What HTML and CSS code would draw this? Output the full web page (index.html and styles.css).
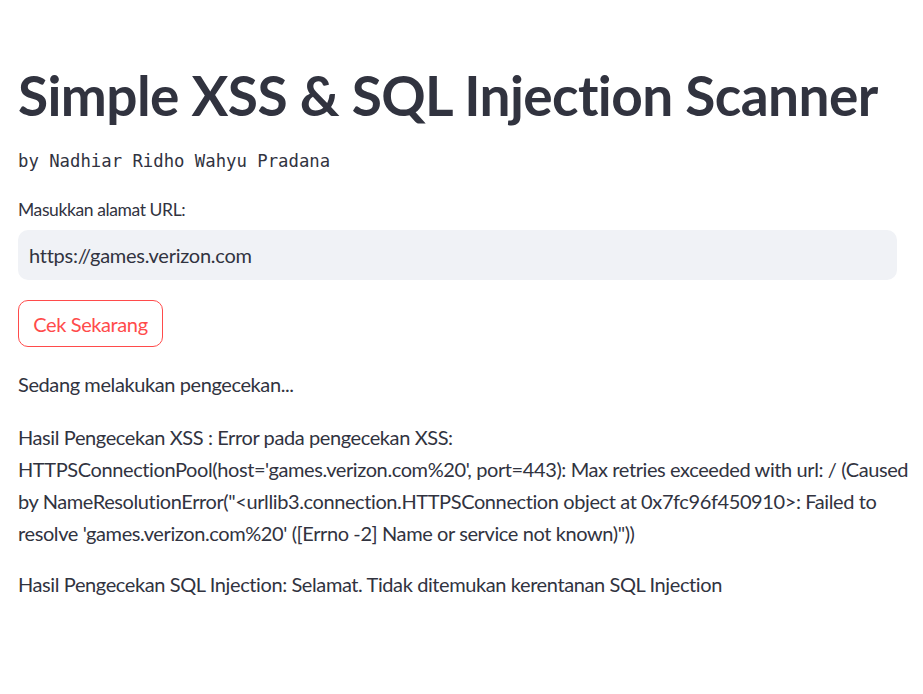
FILE: index.html
```html
<!DOCTYPE html>
<html lang="id">
<head>
<meta charset="utf-8">
<title>Simple XSS &amp; SQL Injection Scanner</title>
<link rel="stylesheet" href="styles.css">
</head>
<body>
<main class="page">
  <h1 class="title">Simple XSS &amp; SQL Injection Scanner</h1>
  <div class="byline">by Nadhiar Ridho Wahyu Pradana</div>
  <label class="label" for="url">Masukkan alamat URL:</label>
  <div class="input-wrap">
    <input id="url" class="input" type="text" value="https://games.verizon.com">
  </div>
  <div class="btn-row"><button class="btn" type="button">Cek Sekarang</button></div>
  <p class="text status">Sedang melakukan pengecekan...</p>
  <p class="text result">Hasil Pengecekan XSS : Error pada pengecekan XSS:<br>HTTPSConnectionPool(host='games.verizon.com%20', port=443): Max retries exceeded with url: / (Caused<br>by NameResolutionError("&lt;urllib3.connection.HTTPSConnection object at 0x7fc96f450910&gt;: Failed to<br>resolve 'games.verizon.com%20' ([Errno -2] Name or service not known)"))</p>
  <p class="text result">Hasil Pengecekan SQL Injection: Selamat. Tidak ditemukan kerentanan SQL Injection</p>
</main>
</body>
</html>
```
FILE: styles.css
```css
html, body {
  margin: 0;
  padding: 0;
  background: #ffffff;
}
body {
  font-family: Lato, "Noto Sans", sans-serif;
  color: #31333f;
}
.page {
  display: flex;
  flex-direction: column;
  width: 879px;
  padding: 62px 0 0 18px;
}
.title {
  margin: 0;
  font-size: 55px;
  line-height: 66px;
  font-weight: 700;
  letter-spacing: -0.6px;
  color: #31333f;
  white-space: nowrap;
}
.byline {
  margin-top: 19px;
  font-family: "DejaVu Sans Mono", "Liberation Mono", monospace;
  font-size: 17.3px;
  line-height: 28px;
  color: #31333f;
}
.label {
  margin-top: 23px;
  font-size: 17.5px;
  line-height: 24px;
  letter-spacing: -0.4px;
  color: #31333f;
}
.input-wrap {
  margin-top: 8px;
  height: 50px;
  background: #f0f2f6;
  border-radius: 10px;
  display: flex;
  align-items: center;
}
.input {
  flex: 1;
  border: none;
  background: transparent;
  outline: none;
  font-family: inherit;
  font-size: 20px;
  letter-spacing: -0.25px;
  color: #31333f;
  padding: 0 11px;
  height: 100%;
}
.btn-row {
  margin-top: 20px;
  display: flex;
}
.btn {
  height: 47px;
  width: 145px;
  border: 1px solid #ff4b4b;
  border-radius: 10px;
  background: #ffffff;
  color: #ff4b4b;
  font-family: inherit;
  font-size: 20px;
  letter-spacing: -0.4px;
  padding: 0;
}
.text {
  margin: 0;
  font-size: 20px;
  line-height: 32px;
  letter-spacing: -0.4px;
  white-space: nowrap;
}
.status { margin-top: 21px; }
.result { margin-top: 21px; }
.result + .result { margin-top: 19px; }
```
